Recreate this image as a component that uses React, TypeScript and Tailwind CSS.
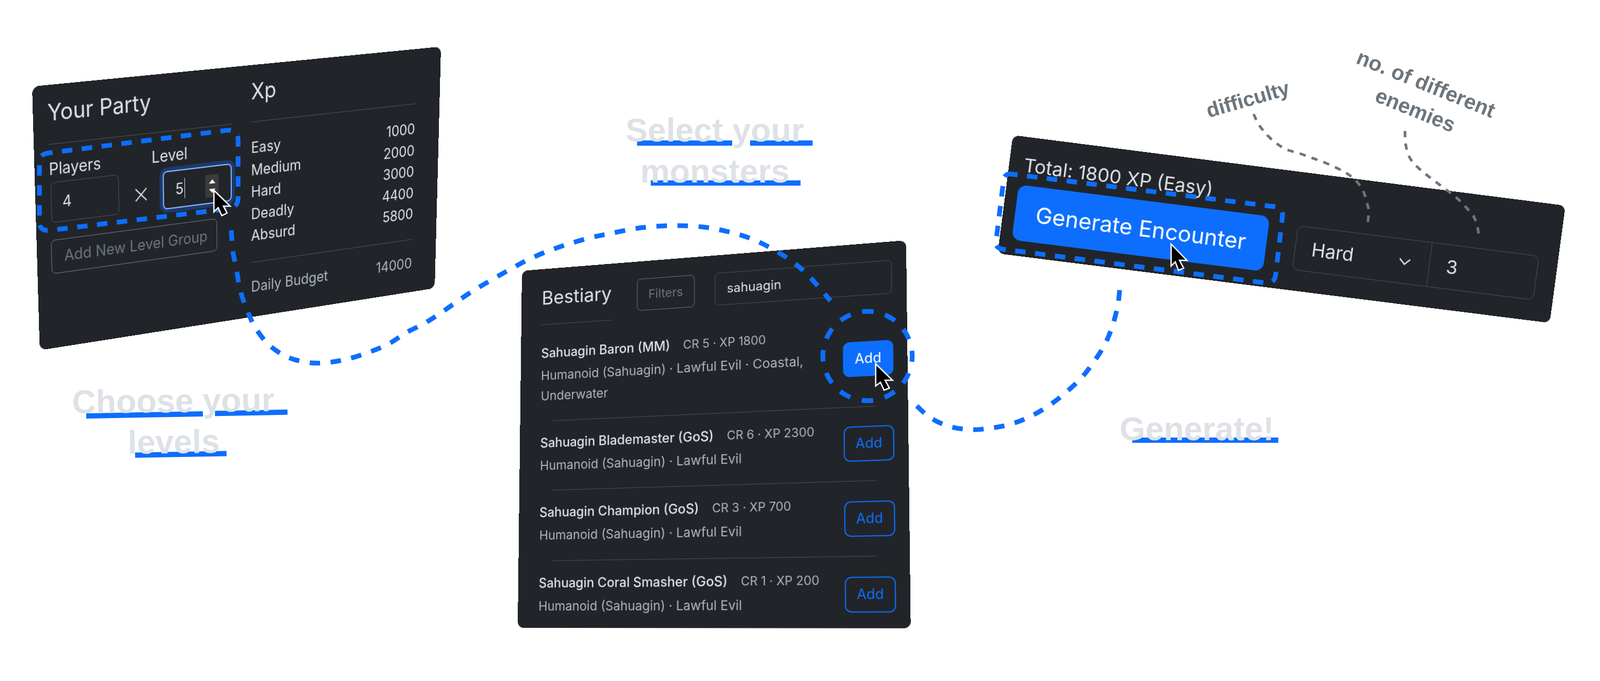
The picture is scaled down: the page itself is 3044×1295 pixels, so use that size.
import type { ReactNode } from 'react';

type Pt = [number, number];

const sans = "[font-family:Inter,'Noto_Sans',sans-serif]";

// maps a local w x h box onto the four corners of a tilted card
function quadMatrix(w: number, h: number, q: Pt[]) {
  const [[x0, y0], [x1, y1], [x2, y2], [x3, y3]] = q;
  const dx1 = x1 - x2;
  const dx2 = x3 - x2;
  const sx = x0 - x1 + x2 - x3;
  const dy1 = y1 - y2;
  const dy2 = y3 - y2;
  const sy = y0 - y1 + y2 - y3;
  const den = dx1 * dy2 - dx2 * dy1;
  const g = (sx * dy2 - dx2 * sy) / den;
  const k = (dx1 * sy - sx * dy1) / den;
  const a = x1 - x0 + g * x1;
  const b = x3 - x0 + k * x3;
  const d = y1 - y0 + g * y1;
  const e = y3 - y0 + k * y3;
  return `matrix3d(${a / w},${d / w},0,${g / w},${b / h},${e / h},0,${k / h},0,0,1,0,${x0},${y0},0,1)`;
}

// smooth line through hand-picked points
function smooth(p: Pt[]) {
  let d = `M ${p[0][0]} ${p[0][1]}`;
  for (let i = 0; i < p.length - 1; i++) {
    const a = p[Math.max(i - 1, 0)];
    const b = p[i];
    const c = p[i + 1];
    const e = p[Math.min(i + 2, p.length - 1)];
    d += ` C ${b[0] + (c[0] - a[0]) / 6} ${b[1] + (c[1] - a[1]) / 6} ${c[0] - (e[0] - b[0]) / 6} ${c[1] - (e[1] - b[1]) / 6} ${c[0]} ${c[1]}`;
  }
  return d;
}

function Card({ w, h, corners, children }: { w: number; h: number; corners: Pt[]; children: ReactNode }) {
  return (
    <div
      className={`absolute left-0 top-0 origin-top-left rounded-xl bg-[#212529] text-[#dee2e6] ${sans}`}
      style={{ width: w, height: h, transform: quadMatrix(w, h, corners) }}
    >
      {children}
    </div>
  );
}

function PartyCard() {
  const rows = [
    ['Easy', '1000'],
    ['Medium', '2000'],
    ['Hard', '3000'],
    ['Deadly', '4400'],
    ['Absurd', '5800'],
  ];
  return (
    <Card w={770} h={430} corners={[[61, 164.5], [839, 88.6], [827, 548], [75.6, 666]]}>
      <div className="flex pl-[25px] pt-[22px] text-[25.5px]">
        <div className="w-[333px]">
          <h4 className="text-[37px] leading-[43px]">Your Party</h4>
          <div className="mt-[29px] h-px bg-[#495057]" />
          <div className="mt-[24px] flex text-[26.5px] leading-[30px]">
            <span className="w-[183px]">Players</span>
            <span>Level</span>
          </div>
          <div className="mt-[7px] flex items-start">
            <div className="ml-[2px] flex h-[66px] w-[121px] items-center rounded-lg border border-[#495057] pl-[19px]">4</div>
            <div className="flex h-[76px] w-[80px] items-center justify-center">
              <svg width="24" height="24" viewBox="0 0 24 24" className="stroke-[#dee2e6]" strokeWidth="2">
                <path d="M2 2 L22 22 M22 2 L2 22" />
              </svg>
            </div>
            <div className="relative mt-[4px] flex h-[64px] w-[129px] items-center rounded-lg border-2 border-[#86b7fe] pl-[21px] shadow-[0_0_0_6px_#1c3a6b]">
              <span>5</span>
              <span className="ml-px h-[34px] w-px bg-[#dee2e6]" />
              <div className="absolute right-[23px] top-[13px] flex h-[38px] w-[25px] flex-col items-center justify-center gap-[9px] bg-[#3b3b3b]">
                <svg width="12" height="7" viewBox="0 0 12 7" className="fill-white"><path d="M6 0 L12 7 L0 7 Z" /></svg>
                <svg width="12" height="7" viewBox="0 0 12 7" className="fill-white"><path d="M0 0 L12 0 L6 7 Z" /></svg>
              </div>
            </div>
          </div>
          <div className="mt-[18px] flex h-[56px] w-[304px] items-center rounded-lg border border-[#6c757d] pl-[22px] text-[#6c757d]">
            Add New Level Group
          </div>
        </div>
        <div className="ml-[36px] w-[326px]">
          <h4 className="text-[37px] leading-[43px]">Xp</h4>
          <div className="mt-[29px] h-px bg-[#495057]" />
          <div className="mt-[24px] leading-[37.5px]">
            {rows.map(([label, xp]) => (
              <div key={label} className="flex justify-between">
                <span>{label}</span>
                <span>{xp}</span>
              </div>
            ))}
          </div>
          <div className="mt-[27px] h-px bg-[#495057]" />
          <div className="mt-[23px] flex justify-between leading-[37.5px] text-[#adb5bd]">
            <span>Daily Budget</span>
            <span>14000</span>
          </div>
        </div>
      </div>
    </Card>
  );
}

const monsters = [
  { name: 'Sahuagin Baron (MM)', stats: 'CR 5 · XP 1800', desc: 'Humanoid (Sahuagin) · Lawful Evil · Coastal, Underwater', active: true, pb: 'pb-[29px]' },
  { name: 'Sahuagin Blademaster (GoS)', stats: 'CR 6 · XP 2300', desc: 'Humanoid (Sahuagin) · Lawful Evil', active: false, pb: 'pb-[28px]' },
  { name: 'Sahuagin Champion (GoS)', stats: 'CR 3 · XP 700', desc: 'Humanoid (Sahuagin) · Lawful Evil', active: false, pb: 'pb-[29px]' },
  { name: 'Sahuagin Coral Smasher (GoS)', stats: 'CR 1 · XP 200', desc: 'Humanoid (Sahuagin) · Lawful Evil', active: false, pb: 'pb-[30px]' },
];

function BestiaryCard() {
  return (
    <Card w={740} h={700} corners={[[993, 515], [1724, 457], [1733, 1195], [985, 1194]]}>
      <div className="flex items-start pl-[42px] pr-[26px] pt-[34px]">
        <div className="w-[142px]">
          <h4 className="pt-[4px] text-[37px] leading-[40px]">Bestiary</h4>
          <div className="mt-[32px] h-px bg-[#495057]" />
        </div>
        <div className="ml-[51px] flex h-[62px] w-[113px] items-center justify-center rounded-lg border border-[#6c757d] text-[23.5px] text-[#6c757d]">
          Filters
        </div>
        <div className="ml-[39px] flex h-[62px] w-[327px] items-center rounded-lg border border-[#495057] pl-[22px] text-[24px]">
          sahuagin
        </div>
      </div>
      <div className="pt-[14px]">
        {monsters.map((m, i) => (
          <div key={m.name}>
            {i > 0 && <div className="ml-[67px] mr-[58px] h-px bg-[#495057]" />}
            <div className="flex items-center justify-between pl-[42px] pr-[25px]">
              <div className={`w-[540px] pt-[22px] text-[25px] leading-[40px] ${m.pb}`}>
                <div className="flex gap-[25px] whitespace-nowrap">
                  <span className="font-medium">{m.name}</span>
                  <span className="text-[22.5px] text-[#adb5bd]">{m.stats}</span>
                </div>
                <div className="mt-[4px] text-[24.5px] text-[#adb5bd]">{m.desc}</div>
              </div>
              {m.active ? (
                <div className="flex h-[64px] w-[90px] items-center justify-center rounded-xl bg-[#0d6efd] text-[25px] text-white">Add</div>
              ) : (
                <div className="flex h-[64px] w-[90px] items-center justify-center rounded-xl border-2 border-[#0d6efd] text-[25px] text-[#0d6efd]">Add</div>
              )}
            </div>
          </div>
        ))}
      </div>
    </Card>
  );
}

function GenerateCard() {
  return (
    <Card w={1060} h={225} corners={[[1927, 257], [2978, 391], [2948, 614], [1898, 482]]}>
      <div className="pl-[23px] pt-[33px]">
        <div className="pl-[5px] text-[36px] leading-[40px]">Total: 1800 XP (Easy)</div>
        <div className="mt-[18px] flex items-center">
          <div className="flex h-[105px] w-[480px] items-center justify-center rounded-2xl bg-[#0d6efd] text-[42.5px] text-white">
            Generate Encounter
          </div>
          <div className="ml-[55px] flex h-[85px] w-[465px] rounded-xl border border-[#495057] text-[35.5px]">
            <div className="flex w-[258px] items-center justify-between border-r border-[#495057] pl-[31px] pr-[35px]">
              <span>Hard</span>
              <svg width="24" height="14" viewBox="0 0 24 14" fill="none" className="stroke-[#dee2e6]" strokeWidth="2.5">
                <path d="M2 2 L12 12 L22 2" />
              </svg>
            </div>
            <div className="flex items-center pl-[32px]">3</div>
          </div>
        </div>
      </div>
    </Card>
  );
}

function Heading({ lines, left, top, width, tilt }: { lines: string[]; left: string; top: string; width: string; tilt: string }) {
  return (
    <h2 className={`absolute ${left} ${top} ${width} ${tilt} text-center text-[63px] font-bold leading-[78px] text-[#dee2e6] [font-family:'Liberation_Sans',Arial,sans-serif]`}>
      {lines.map((l) => (
        <div key={l} className="relative z-10">{l}</div>
      ))}
    </h2>
  );
}

function Bar({ cls }: { cls: string }) {
  return <div className={`absolute h-[10px] bg-[#0d6efd] ${cls}`} />;
}

function Cursor({ points }: { points: Pt[] }) {
  return <polygon points={points.map((p) => p.join(',')).join(' ')} fill="#000" stroke="#fff" strokeWidth="2.5" strokeLinejoin="miter" />;
}

const partyLink: Pt[] = [
  [440, 438], [443, 477], [450, 513], [457, 552], [471, 592], [487, 625], [513, 657], [547, 679], [584, 689], [617, 690],
  [660, 683], [704, 669], [741, 653], [772, 633], [809, 614], [843, 592], [900, 553], [978, 508], [1013, 490], [1049, 475],
  [1085, 463], [1123, 452], [1161, 444], [1220, 433], [1281, 429], [1340, 432], [1391, 442], [1432, 455], [1467, 472],
  [1501, 493], [1531, 517], [1557, 545], [1580, 572],
];

const generateLink: Pt[] = [
  [1744, 772], [1771, 795], [1807, 811], [1847, 817], [1886, 814], [1925, 806], [1962, 791], [1996, 771], [2027, 747],
  [2057, 719], [2081, 688], [2102, 655], [2117, 618], [2127, 578], [2131, 541],
];

const difficultyLink: Pt[] = [
  [2385, 217], [2395, 237], [2411, 257], [2429, 273], [2447, 284], [2473, 292], [2495, 300], [2520, 309], [2556, 326],
  [2578, 342], [2593, 362], [2600, 384], [2604, 401], [2602, 425],
];

const enemiesLink: Pt[] = [
  [2673, 249], [2674, 273], [2681, 298], [2695, 316], [2716, 334], [2749, 359], [2771, 376], [2789, 394], [2804, 412],
  [2812, 437], [2812, 454],
];

export default function App() {
  return (
    <div className="relative h-[1295px] w-[3044px] overflow-hidden bg-white">
      <PartyCard />
      <BestiaryCard />
      <GenerateCard />

      <Bar cls="left-[164px] top-[784px] w-[222px] -rotate-1" />
      <Bar cls="left-[409px] top-[780px] w-[138px] -rotate-1" />
      <Bar cls="left-[257px] top-[859px] w-[174px] -rotate-1" />
      <Heading lines={['Choose your', 'levels']} left="left-[80px]" top="top-[723px]" width="w-[500px]" tilt="-rotate-[0.7deg]" />

      <Bar cls="left-[1212px] top-[267px] w-[181px]" />
      <Bar cls="left-[1427px] top-[267px] w-[119px]" />
      <Bar cls="left-[1238px] top-[343px] w-[285px]" />
      <Heading lines={['Select your', 'monsters']} left="left-[1110px]" top="top-[208px]" width="w-[500px]" tilt="" />

      <Bar cls="left-[2154px] top-[832px] w-[278px]" />
      <Heading lines={['Generate!']} left="left-[2027px]" top="top-[776px]" width="w-[500px]" tilt="" />

      <div className="absolute left-[2274px] top-[165px] w-[200px] -rotate-[16deg] text-center text-[39px] font-bold leading-[48px] text-[#6c757d] [font-family:'Liberation_Sans',Arial,sans-serif]">
        difficulty
      </div>
      <div className="absolute left-[2543px] top-[130px] w-[320px] rotate-[22deg] text-center text-[40px] font-bold leading-[54px] text-[#6c757d] [font-family:'Liberation_Sans',Arial,sans-serif]">
        <div>no. of different</div>
        <div>enemies</div>
      </div>

      <svg className="absolute left-0 top-0" width="3044" height="1295" viewBox="0 0 3044 1295" fill="none">
        <g stroke="#0d6efd" strokeWidth="9">
          <path strokeDasharray="20 18" strokeDashoffset="12" d="M 92 291 L 430 248 Q 453 245 453 266 L 453 376 Q 453 394 435 397 L 95 438 Q 75 440 75 422 L 75 310 Q 75 293 92 291 Z" />
          <path strokeDasharray="20 20" d={smooth(partyLink)} />
          <circle cx="1650.5" cy="677" r="85" strokeDasharray="22 22.5" strokeDashoffset="11" />
          <path strokeDasharray="20 20" d={smooth(generateLink)} />
          <path strokeDasharray="20 18" strokeDashoffset="8" d="M 1924 331 L 2425 393 Q 2441 395 2440 410 L 2427 522 Q 2425 540 2408 538 L 1908 474 Q 1893 472 1895 458 L 1909 345 Q 1911 329 1924 331 Z" />
        </g>
        <g stroke="#6c757d" strokeWidth="5" strokeDasharray="12 12">
          <path d={smooth(difficultyLink)} />
          <path d={smooth(enemiesLink)} />
        </g>
        <Cursor points={[[407, 362], [438, 392], [425, 392], [432, 405], [422, 410], [415, 395], [407, 403]]} />
        <Cursor points={[[1666, 692], [1698, 723], [1684, 723], [1692, 738], [1682, 742], [1675, 727], [1666, 734]]} />
        <Cursor points={[[2228, 464], [2258, 495], [2244, 495], [2252, 510], [2242, 514], [2236, 498], [2228, 506]]} />
      </svg>
    </div>
  );
}
